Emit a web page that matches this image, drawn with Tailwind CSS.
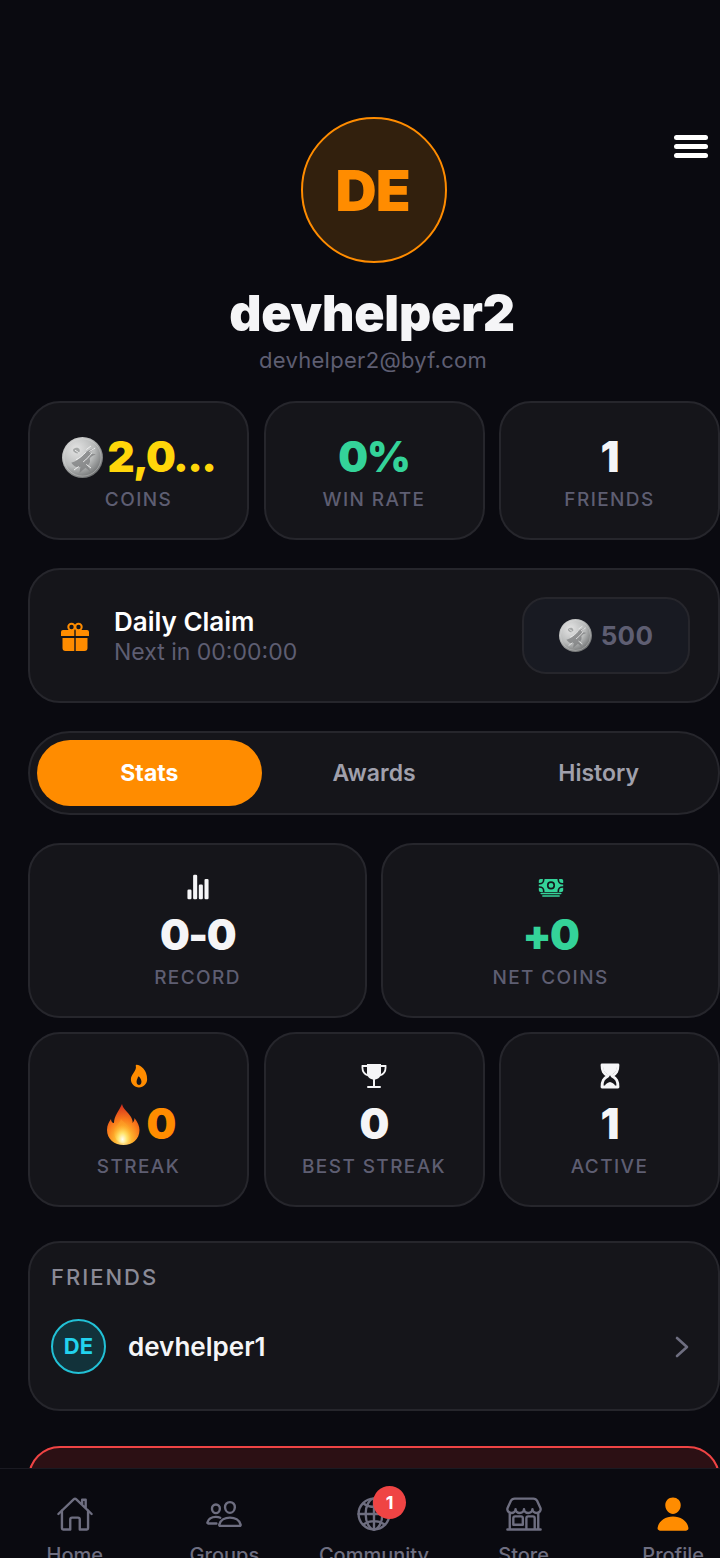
<!DOCTYPE html>
<html lang="en">
<head>
<meta charset="utf-8">
<script src="https://cdn.jsdelivr.net/npm/@tailwindcss/browser@4"></script>
</head>
<body class="bg-[#0a0a10]">
<div class="relative w-[720px] h-[1558px] overflow-hidden bg-[#0a0a10] [font-family:Inter,sans-serif]">
<svg width="0" height="0" class="absolute">
  <defs>
    <radialGradient id="coinGrad" cx="35%" cy="30%" r="80%">
      <stop offset="0" stop-color="#e4e4e4"/><stop offset="0.55" stop-color="#b8baba"/><stop offset="1" stop-color="#5f6162"/>
    </radialGradient>
    <symbol id="coin" viewBox="0 0 40 40">
      <circle cx="20" cy="20" r="20" fill="url(#coinGrad)"/>
      <circle cx="20" cy="20" r="18.200" fill="none" stroke="#e4e4e4" stroke-opacity=".45" stroke-width=".8"/>
      <path d="M9 25c5-1 8-4 12-8 3-3 6-5 11-6-2 2-4 3-5 5 2 0 4 0 6 1-3 1-5 2-6 4 1 3 0 5-2 7l3 6-5-4-6 5 1-6c-3 1-6 0-9-4z" fill="#7c7e7f" opacity=".75"/>
      <path d="M11 12c2-2 5-2 6 0s0 3-2 4c-2 0-5-2-4-4z" fill="#8c8e8f" opacity=".7"/>
      <path d="M14 22c3-1 6-4 9-7M21 24c3-2 5-5 8-8M24 12l4-3M27 14l5-3M16 29l-4 3M24 27l4 3M13 13l3 2" fill="none" stroke="#f2f2f2" stroke-width=".9" stroke-linecap="round"/>
    </symbol>
  </defs>
</svg>

<div class="relative w-[748px] px-[28px] pt-[117px] flex flex-col">
  <!-- menu -->
  <div class="absolute left-[674px] top-[135px] w-[34px] flex flex-col gap-[4px]">
    <div class="h-[5px] rounded-full bg-white"></div>
    <div class="h-[5px] rounded-full bg-white"></div>
    <div class="h-[5px] rounded-full bg-white"></div>
  </div>

  <!-- header -->
  <div class="flex flex-col items-center">
    <div class="w-[146px] h-[146px] rounded-full border-2 border-[#ff8c00] bg-[#32200d] flex items-center justify-center">
      <span class="mr-[3px] text-[57px] leading-none font-black tracking-[-1px] text-[#ff8c00]">DE</span>
    </div>
    <div class="mt-[20px] mr-[4px] text-[50px] leading-[60px] font-black text-[#f5f5f7] tracking-[-0.2px]">devhelper2</div>
    <div class="mt-[3px] mr-[2px] text-[22px] leading-[28px] text-[#5e5e72] tracking-[0.3px]">devhelper2@byf.com</div>
  </div>

  <!-- top stats -->
  <div class="mt-[27px] grid grid-cols-3 gap-[14.5px]">
    <div class="h-[139px] rounded-[32px] bg-[#15151a] border-2 border-[#26262c] flex flex-col items-center pt-[28px]">
      <div class="h-[52px] flex items-center gap-[5px]">
        <svg class="w-[41px] h-[41px] shrink-0"><use href="#coin"/></svg>
        <span class="text-[42px] leading-[52px] font-black tracking-[-1.5px] text-[#ffd60a]">2,0...</span>
      </div>
      <div class="mt-[5px] text-[19px] leading-[24px] font-medium tracking-[1.4px] text-[#5e5e72]">COINS</div>
    </div>
    <div class="h-[139px] rounded-[32px] bg-[#15151a] border-2 border-[#26262c] flex flex-col items-center pt-[28px]">
      <div class="h-[52px] text-[42px] leading-[52px] font-black tracking-[-1px] text-[#34d399]">0%</div>
      <div class="mt-[5px] text-[19px] leading-[24px] font-medium tracking-[1.4px] text-[#5e5e72]">WIN RATE</div>
    </div>
    <div class="h-[139px] rounded-[32px] bg-[#15151a] border-2 border-[#26262c] flex flex-col items-center pt-[28px]">
      <div class="h-[52px] text-[42px] leading-[52px] font-black tracking-[-1px] text-[#f5f5f7]">1</div>
      <div class="mt-[5px] text-[19px] leading-[24px] font-medium tracking-[1.4px] text-[#5e5e72]">FRIENDS</div>
    </div>
  </div>

  <!-- daily claim -->
  <div class="mt-[28px] h-[135px] rounded-[32px] bg-[#15151a] border-2 border-[#26262c] flex items-center pl-[29px] pr-[28px]">
    <svg class="w-[32px] h-[32px] shrink-0" viewBox="0 0 32 32">
      <circle cx="12.500" cy="7" r="3.200" fill="none" stroke="#ff8c00" stroke-width="2"/>
      <circle cx="19.500" cy="7" r="3.200" fill="none" stroke="#ff8c00" stroke-width="2"/>
      <path d="M4 10h11.300v6H2v-4a2 2 0 012-2zM16.700 10H28a2 2 0 012 2v4H16.700zM3.500 18h11.800v13H6.500a3 3 0 01-3-3zM16.700 18h11.800v10a3 3 0 01-3 3h-8.800z" fill="#ff8c00"/>
    </svg>
    <div class="ml-[23px] pt-[2px] flex flex-col">
      <div class="text-[26px] leading-[30px] font-semibold text-white">Daily Claim</div>
      <div class="mt-[1px] text-[23px] leading-[29px] text-[#5e5e72]">Next in 00:00:00</div>
    </div>
    <div class="ml-auto w-[168px] h-[77px] rounded-[24px] bg-[#181a22] border-2 border-[#26262c] flex items-center justify-center gap-[9px]">
      <svg class="w-[33px] h-[33px] shrink-0"><use href="#coin"/></svg>
      <span class="text-[26px] font-bold text-[#5e5e72] tracking-[0.3px]">500</span>
    </div>
  </div>

  <!-- tabs -->
  <div class="mt-[28px] h-[84px] rounded-full bg-[#15151a] border-2 border-[#26262c] flex items-center px-[7px]">
    <div class="flex-1 h-[66px] rounded-full bg-[#ff8c00] flex items-center justify-center text-[23px] font-bold text-white">Stats</div>
    <div class="flex-1 h-[66px] rounded-full flex items-center justify-center text-[23px] font-semibold text-[#a0a0ac]">Awards</div>
    <div class="flex-1 h-[66px] rounded-full flex items-center justify-center text-[23px] font-semibold text-[#a0a0ac]">History</div>
  </div>

  <!-- record / net -->
  <div class="mt-[28px] grid grid-cols-2 gap-[14px]">
    <div class="h-[175px] rounded-[32px] bg-[#15151a] border-2 border-[#26262c] flex flex-col items-center pt-[29px]">
      <svg class="w-[26px] h-[26px] shrink-0" viewBox="0 0 512 512" fill="#f5f5f7"><path d="M104 496H72a24 24 0 01-24-24V328a24 24 0 0124-24h32a24 24 0 0124 24v144a24 24 0 01-24 24zM328 496h-32a24 24 0 01-24-24V232a24 24 0 0124-24h32a24 24 0 0124 24v240a24 24 0 01-24 24zM440 496h-32a24 24 0 01-24-24V120a24 24 0 0124-24h32a24 24 0 0124 24v352a24 24 0 01-24 24zM216 496h-32a24 24 0 01-24-24V40a24 24 0 0124-24h32a24 24 0 0124 24v432a24 24 0 01-24 24z"/></svg>
      <div class="mt-[9px] text-[42px] leading-[52px] font-black tracking-[-1.5px] text-[#f5f5f7]">0-0</div>
      <div class="mt-[5px] text-[19px] leading-[24px] font-medium tracking-[1.4px] text-[#5e5e72]">RECORD</div>
    </div>
    <div class="h-[175px] rounded-[32px] bg-[#15151a] border-2 border-[#26262c] flex flex-col items-center pt-[29px]">
      <svg class="w-[26px] h-[26px] shrink-0" viewBox="0 0 512 512" fill="#34d399"><path d="M448 400H64a16 16 0 010-32h384a16 16 0 010 32zM416 448H96a16 16 0 010-32h320a16 16 0 010 32zM32 272H16v48a32 32 0 0032 32h48v-16a64.070 64.070 0 00-64-64zM480 272a64.070 64.070 0 00-64 64v16h48a32 32 0 0032-32v-48zM32 176a64.070 64.070 0 0064-64V96H48a32 32 0 00-32 32v48zM416 96v16a64.070 64.070 0 0064 64h16v-48a32 32 0 00-32-32zM256 176a48 48 0 1048 48 48.050 48.050 0 00-48-48z"/><path fill-rule="evenodd" d="M128 96h256v16a96 96 0 0096 96h16v32h-16a96 96 0 00-96 96v16H128v-16a96 96 0 00-96-96H16v-32h16a96 96 0 0096-96zM256 144a80 80 0 100 160 80 80 0 000-160z"/></svg>
      <div class="mt-[9px] text-[42px] leading-[52px] font-black tracking-[-1.5px] text-[#34d399]">+0</div>
      <div class="mt-[5px] text-[19px] leading-[24px] font-medium tracking-[1.4px] text-[#5e5e72]">NET COINS</div>
    </div>
  </div>

  <!-- streak row -->
  <div class="mt-[14px] grid grid-cols-3 gap-[14.5px]">
    <div class="h-[175px] rounded-[32px] bg-[#15151a] border-2 border-[#26262c] flex flex-col items-center pt-[29px]">
      <svg class="w-[26px] h-[26px] shrink-0" viewBox="0 0 512 512" fill="#ff8c00"><path d="M394.230 197.560a300.430 300.430 0 00-53.370-90C301.200 61.650 249.050 32 208 32a16 16 0 00-15.480 20c13.870 53-14.880 97.070-45.310 143.720C122 234.360 96 274.270 96 320c0 88.220 71.780 160 160 160s160-71.780 160-160c0-43.300-7.320-84.490-21.770-122.440zm-105.900 221.130C278 429.690 265.050 432 256 432s-22-2.310-32.330-13.310S208 390.240 208 368c0-25.140 8.820-44.280 17.340-62.780 4.950-10.760 10-21.670 13-33.170a8 8 0 0112.490-4.510A126.480 126.480 0 01275 292c18.170 24 29 52.420 29 76 0 22.240-5.420 39.770-15.670 50.690z"/></svg>
      <div class="mt-[9px] ml-[4px] h-[52px] flex items-center gap-[7px]">
        <svg class="w-[34px] h-[42px] shrink-0" viewBox="0 0 34 42">
          <defs>
            <radialGradient id="flameG" cx="50%" cy="88%" r="85%">
              <stop offset="0" stop-color="#fff3b0"/><stop offset=".3" stop-color="#ffb52e"/><stop offset=".6" stop-color="#f97a1a"/><stop offset="1" stop-color="#d32f1e"/>
            </radialGradient>
            <radialGradient id="flameCore" cx="50%" cy="85%" r="60%">
              <stop offset="0" stop-color="#fffdf0"/><stop offset=".45" stop-color="#ffe36a"/><stop offset="1" stop-color="#ffa726" stop-opacity=".4"/>
            </radialGradient>
          </defs>
          <path d="M16 1c1 5 6 8 9 13 1 2 2 4 1.500 6 1-1 2-3 2-5 3 4 5 8 5 12 0 9-7 15-16 15S1 36 1 27c0-5 2-8 4-11 0 2 1 4 3 4C8 13 13 8 16 1z" fill="url(#flameG)"/>
          <path d="M8 29c0-5 5-7 7-13 3 4 10 8 10 14 0 5-3 10-8 10s-9-5-9-11z" fill="url(#flameCore)"/>
        </svg>
        <span class="text-[42px] leading-[52px] font-black tracking-[-1px] text-[#ff8c00]">0</span>
      </div>
      <div class="mt-[5px] text-[19px] leading-[24px] font-medium tracking-[1.4px] text-[#5e5e72]">STREAK</div>
    </div>
    <div class="h-[175px] rounded-[32px] bg-[#15151a] border-2 border-[#26262c] flex flex-col items-center pt-[29px]">
      <svg class="w-[26px] h-[26px] shrink-0" viewBox="0 0 26 26" fill="#f5f5f7">
        <path d="M6 1h14v9c0 4-3 6.500-7 6.500S6 14 6 10z"/>
        <path d="M6 3H1.500C1 8 3 11 7 12.500M20 3h4.500c.5 5-1.500 8-5.500 9.500" fill="none" stroke="#f5f5f7" stroke-width="1.800"/>
        <path d="M12 16h2v7h-2zM7 23h12a1 1 0 010 2H7a1 1 0 010-2z"/>
      </svg>
      <div class="mt-[9px] text-[42px] leading-[52px] font-black tracking-[-1px] text-[#f5f5f7]">0</div>
      <div class="mt-[5px] text-[19px] leading-[24px] font-medium tracking-[1.4px] text-[#5e5e72]">BEST STREAK</div>
    </div>
    <div class="h-[175px] rounded-[32px] bg-[#15151a] border-2 border-[#26262c] flex flex-col items-center pt-[29px]">
      <svg class="w-[26px] h-[26px] shrink-0" viewBox="0 0 26 26">
        <path d="M5 2h16c0 6-1.500 8.500-6 11 4.500 2.500 6 5 6 11H5c0-6 1.500-8.500 6-11-4.500-2.500-6-5-6-11z" fill="none" stroke="#f5f5f7" stroke-width="2.800" stroke-linejoin="round"/>
        <path d="M6 3h14c0 5-2 7.500-7 10-5-2.500-7-5-7-10zM8 23c0-2 2-3 5-4 3 1 5 2 5 4z" fill="#f5f5f7"/>
      </svg>
      <div class="mt-[9px] text-[42px] leading-[52px] font-black tracking-[-1px] text-[#f5f5f7]">1</div>
      <div class="mt-[5px] text-[19px] leading-[24px] font-medium tracking-[1.4px] text-[#5e5e72]">ACTIVE</div>
    </div>
  </div>

  <!-- friends -->
  <div class="mt-[34px] h-[170px] rounded-[32px] bg-[#15151a] border-2 border-[#26262c] px-[21px] pt-[21px]">
    <div class="text-[22px] leading-[26px] font-medium tracking-[2px] text-[#8a8a96]">FRIENDS</div>
    <div class="mt-[29px] flex items-center">
      <div class="w-[55px] h-[55px] shrink-0 rounded-full border-2 border-[#22c1d6] bg-[#12323a] flex items-center justify-center text-[22px] font-bold text-[#22d3ee]">DE</div>
      <div class="ml-[22px] text-[26px] font-semibold text-[#f5f5f7]">devhelper1</div>
      <svg class="ml-auto mr-[8px] w-[14px] h-[22px]" viewBox="0 0 14 22" fill="none" stroke="#6e6e80" stroke-width="2.600" stroke-linecap="round" stroke-linejoin="round"><path d="M2 2l10 9-10 9"/></svg>
    </div>
  </div>

  <!-- danger card -->
  <div class="mt-[35px] h-[100px] rounded-[32px] bg-[#2c1014] border-2 border-[#ef4444]"></div>
</div>

<!-- bottom nav -->
<nav class="absolute left-0 bottom-0 w-[748px] h-[90px] overflow-hidden bg-[#0a0a10] border-t border-[#1a1a22] flex">
  <div class="flex-1 flex flex-col items-center pt-[26px]">
    <svg class="w-[38px] h-[38px] shrink-0" viewBox="0 0 512 512" fill="none" stroke="#6e6e80" stroke-width="32" stroke-linecap="round" stroke-linejoin="round"><path d="M80 212v236a16 16 0 0016 16h96V328a24 24 0 0124-24h80a24 24 0 0124 24v136h96a16 16 0 0016-16V212"/><path d="M480 256L266.890 52c-5-5.270-16.690-5.340-22 0L32 256M400 179V64h-48v69"/></svg>
    <span class="mt-[10px] text-[20px] leading-[24px] font-medium text-[#6e6e80]">Home</span>
  </div>
  <div class="flex-1 flex flex-col items-center pt-[26px]">
    <svg class="w-[38px] h-[38px] shrink-0" viewBox="0 0 512 512" fill="none" stroke="#6e6e80" stroke-width="32" stroke-linecap="round" stroke-linejoin="round"><path d="M402 168c-2.930 40.670-33.100 72-66 72s-63.120-31.320-66-72c-3-42.310 26.370-72 66-72s69 30.460 66 72z"/><path d="M336 304c-65.170 0-127.840 32.370-143.540 95.410-2.080 8.340 3.150 16.590 11.720 16.590h263.650c8.570 0 13.770-8.250 11.720-16.590C463.850 336.360 401.180 304 336 304z"/><path d="M200 185.940c-2.340 32.480-26.720 58.060-53 58.060s-50.700-25.570-53-58.060C91.610 152.150 115.340 128 147 128s55.390 24.770 53 57.940z"/><path d="M206 306c-18.050-8.270-37.930-11.450-59-11.450-52 0-102.100 25.850-114.650 76.200-1.650 6.660 2.530 13.250 9.370 13.250H154"/></svg>
    <span class="mt-[10px] text-[20px] leading-[24px] font-medium text-[#6e6e80]">Groups</span>
  </div>
  <div class="relative flex-1 flex flex-col items-center pt-[26px]">
    <svg class="w-[38px] h-[38px] shrink-0" viewBox="0 0 512 512" fill="none" stroke="#6e6e80" stroke-width="32" stroke-linecap="round" stroke-linejoin="round"><path d="M256 48C141.130 48 48 141.130 48 256s93.130 208 208 208 208-93.130 208-208S370.870 48 256 48z"/><path d="M256 48c-58.070 0-112.670 93.130-112.670 208S197.930 464 256 464s112.670-93.130 112.670-208S314.070 48 256 48z"/><path d="M117.330 117.330c38.240 27.150 86.380 43.340 138.670 43.340s100.430-16.190 138.670-43.340M394.670 394.670c-38.240-27.150-86.380-43.340-138.670-43.340s-100.430 16.190-138.670 43.340M256 48v416M464 256H48"/></svg>
    <span class="absolute left-[74px] top-[17px] w-[33px] h-[33px] rounded-full bg-[#ef4444] flex items-center justify-center text-[18px] font-bold text-white">1</span>
    <span class="mt-[10px] text-[20px] leading-[24px] font-medium text-[#6e6e80]">Community</span>
  </div>
  <div class="flex-1 flex flex-col items-center pt-[26px]">
    <svg class="w-[38px] h-[38px] shrink-0" viewBox="0 0 512 512" fill="none" stroke="#6e6e80" stroke-width="32" stroke-linecap="round" stroke-linejoin="round"><path d="M448 448V240M64 240v208M382.470 48H129.530c-21.790 0-41.470 12-49.930 30.460L36.300 173c-14.580 31.810 9.630 67.850 47.190 69h2c31.400 0 56.850-25.180 56.850-52.230 0 27 25.460 52.230 56.860 52.230s56.800-23.380 56.800-52.230c0 27 25.450 52.230 56.850 52.230s56.860-23.380 56.860-52.230c0 28.850 25.450 52.230 56.850 52.230h1.950c37.560-1.170 61.770-37.210 47.190-69l-43.300-94.540C423.940 60 404.260 48 382.470 48zM32 464h448M136 288h80a24 24 0 0124 24v88H112v-88a24 24 0 0124-24zM288 464V312a24 24 0 0124-24h64a24 24 0 0124 24v152"/></svg>
    <span class="mt-[10px] text-[20px] leading-[24px] font-medium text-[#6e6e80]">Store</span>
  </div>
  <div class="flex-1 flex flex-col items-center pt-[26px]">
    <svg class="w-[38px] h-[38px] shrink-0" viewBox="0 0 512 512" fill="#ff8c00"><path d="M332.640 64.580C313.180 43.570 286 32 256 32c-30.160 0-57.430 11.500-76.800 32.380-19.580 21.110-29.120 49.800-26.880 80.780C156.760 206.280 203.270 256 256 256s99.160-49.710 103.670-110.820c2.270-30.700-7.330-59.330-27.030-80.600zM432 480H80a31 31 0 01-24.200-11.130c-6.500-7.770-9.120-18.380-7.180-29.110C57.060 392.940 83.400 353.610 124.800 326c36.780-24.510 83.370-38 131.200-38s94.420 13.500 131.200 38c41.400 27.600 67.740 66.930 76.180 113.750 1.940 10.730-.68 21.340-7.180 29.110A31 31 0 01432 480z"/></svg>
    <span class="mt-[10px] text-[20px] leading-[24px] font-medium text-[#6e6e80]">Profile</span>
  </div>
</nav>
</div>
</body>
</html>
